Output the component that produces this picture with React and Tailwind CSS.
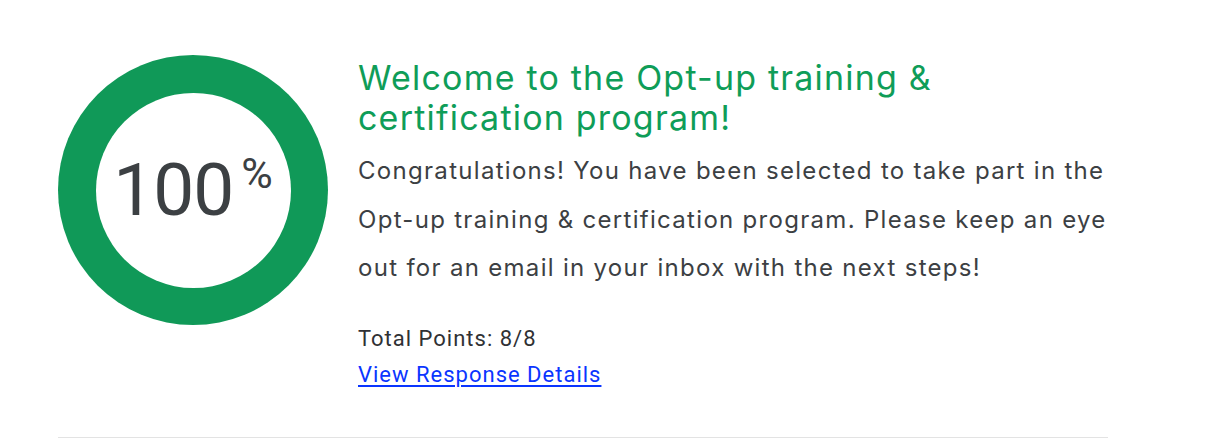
import React from "react";

const ScoreRing = () => {
  return (
    <div className="w-[270px] h-[270px] shrink-0 rounded-full bg-[#109958] flex items-center justify-center">
      <div className="w-[195px] h-[195px] rounded-full bg-white flex items-center justify-center">
        <div className="flex items-start text-[#3c4043] font-['Roboto',sans-serif]">
          <span className="text-[73px] leading-none tracking-[-1px]">100</span>
          <span className="text-[43px] leading-none ml-[8px] -mt-[2px]">%</span>
        </div>
      </div>
    </div>
  );
};

export default function App() {
  return (
    <main className="bg-white w-[1225px] h-[444px] pl-[58px] pt-[55px] font-['Inter',sans-serif]">
      <div className="w-[1050px] border-b border-[#e3e3e3] pb-[47px] flex gap-[30px]">
        <ScoreRing />
        <div className="flex flex-col pt-[3px]">
          <h1 className="text-[34px] leading-[40px] tracking-[1.2px] text-[#0f9d58] w-[650px]">
            Welcome to the Opt-up training &amp; certification program!
          </h1>
          <p className="mt-[9px] text-[24px] leading-[48.5px] tracking-[1.3px] text-[#3c4043] w-[770px]">
            Congratulations! You have been selected to take part in the Opt-up training &amp; certification program. Please keep an eye out for an email in your inbox with the next steps!
          </p>
          <div className="mt-[28px] font-['Roboto',sans-serif] text-[22px] leading-[35px] tracking-[1px] text-[#303134]">
            Total Points: 8/8
          </div>
          <a href="#" className="mt-[4px] font-['Roboto',sans-serif] text-[22px] leading-[30px] tracking-[1px] text-[#0a35ff] underline underline-offset-[3px] w-fit">
            View Response Details
          </a>
        </div>
      </div>
    </main>
  );
}
